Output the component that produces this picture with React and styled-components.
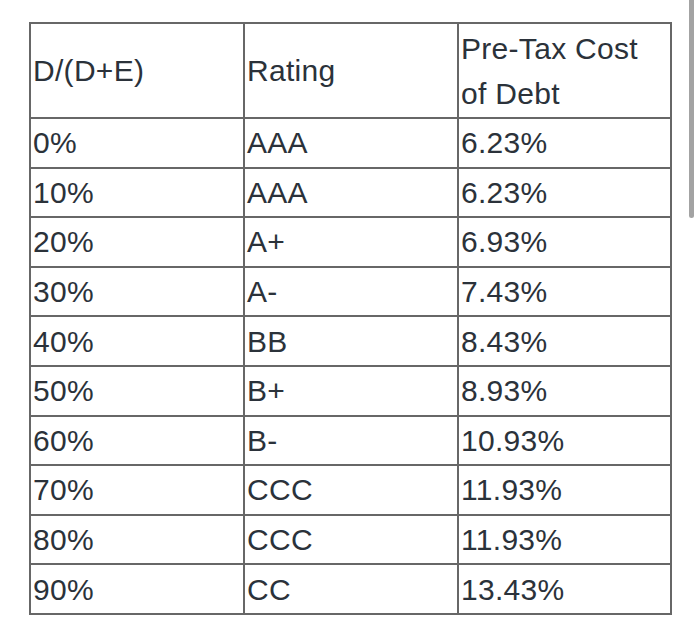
import React from "react";
import styled, { createGlobalStyle } from "styled-components";

const Global = createGlobalStyle`
  html, body { margin: 0; padding: 0; background: #ffffff; }
  body { font-family: "Liberation Sans", Arial, sans-serif; }
`;

const Page = styled.div`
  position: relative;
  width: 700px;
  height: 638px;
  padding: 22px 0 0 29px;
  box-sizing: border-box;
  overflow: hidden;
`;

const Table = styled.table`
  border-collapse: collapse;
  width: 641px;
  table-layout: fixed;
  color: #2b323a;
  font-size: 30px;
  line-height: 45px;
  letter-spacing: 0.3px;
`;

const Cell = styled.td`
  border: 2px solid #676767;
  padding: 0 2px;
  height: ${(p) => (p.$head ? "95px" : "49.6px")};
  vertical-align: middle;
  text-align: left;
  font-weight: normal;
  box-sizing: border-box;
`;

const HeadText = styled.span`
  display: block;
  max-width: 192px;
`;

const Scrollbar = styled.div`
  position: absolute;
  top: 0;
  left: 689px;
  width: 5px;
  height: 218px;
  background: #a3a3a3;
  border-radius: 0 0 3px 3px;
`;

const rows = [
  ["0%", "AAA", "6.23%"],
  ["10%", "AAA", "6.23%"],
  ["20%", "A+", "6.93%"],
  ["30%", "A-", "7.43%"],
  ["40%", "BB", "8.43%"],
  ["50%", "B+", "8.93%"],
  ["60%", "B-", "10.93%"],
  ["70%", "CCC", "11.93%"],
  ["80%", "CCC", "11.93%"],
  ["90%", "CC", "13.43%"],
];

export default function App() {
  return (
    <Page>
      <Global />
      <Table>
        <colgroup>
          <col style={{ width: "214px" }} />
          <col style={{ width: "214px" }} />
          <col style={{ width: "213px" }} />
        </colgroup>
        <tbody>
          <tr>
            <Cell $head>D/(D+E)</Cell>
            <Cell $head>Rating</Cell>
            <Cell $head>
              <HeadText>Pre-Tax Cost of Debt</HeadText>
            </Cell>
          </tr>
          {rows.map((r) => (
            <tr key={r[0]}>
              {r.map((c, i) => (
                <Cell key={i}>{c}</Cell>
              ))}
            </tr>
          ))}
        </tbody>
      </Table>
      <Scrollbar />
    </Page>
  );
}
